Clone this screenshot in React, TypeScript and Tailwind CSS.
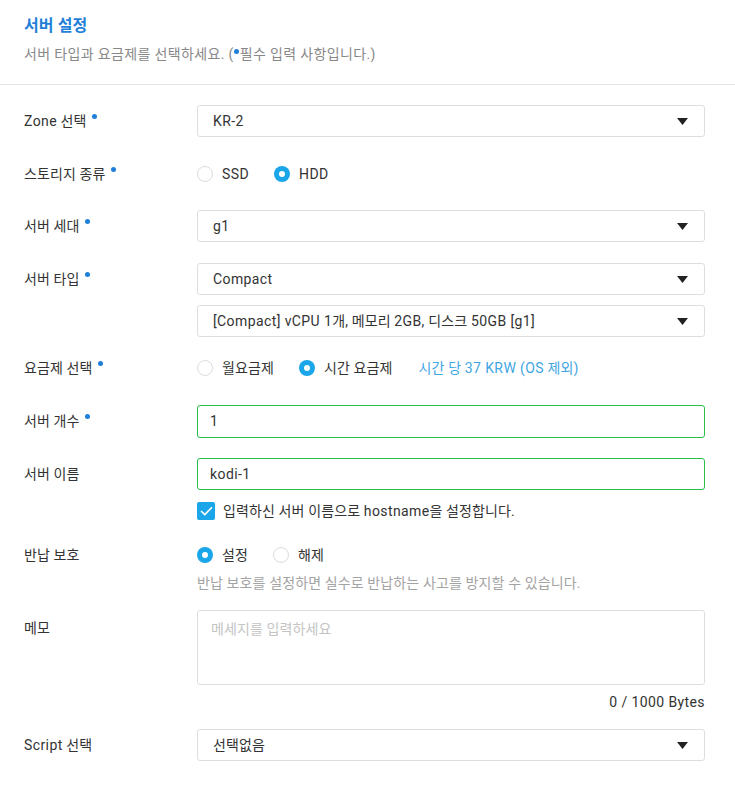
import React from 'react';

const FONT = { fontFamily: 'Roboto, "Noto Sans CJK KR", sans-serif' };

// Latin text in the reference renders slightly wider than Roboto here
function L({ children }: { children: React.ReactNode }) {
  return <span className="tracking-[0.4px]">{children}</span>;
}

function Dot() {
  return <span className="ml-[5px] mb-[10px] inline-block h-[5px] w-[5px] rounded-full bg-[#1f7fd9]" />;
}

function Label({ children, required }: { children: React.ReactNode; required?: boolean }) {
  return (
    <div className="flex w-[173px] shrink-0 items-center text-[14px] text-[#333]">
      <span>{children}</span>
      {required && <Dot />}
    </div>
  );
}

function Select({ children }: { children: React.ReactNode }) {
  return (
    <div className="flex h-[32px] flex-1 items-center justify-between rounded-[3px] border border-[#dedede] bg-white pl-[15px] pr-[16px] text-[14px] text-[#333]">
      <span>{children}</span>
      <svg width="11" height="7" viewBox="0 0 11 7">
        <path d="M0 0H11L5.5 7Z" fill="#222" />
      </svg>
    </div>
  );
}

function Radio({ checked, children }: { checked?: boolean; children: React.ReactNode }) {
  return (
    <div className="flex items-center gap-[9px] text-[14px] text-[#333]">
      {checked ? (
        <span className="flex h-[16px] w-[16px] items-center justify-center rounded-full bg-[#1aa6e8]">
          <span className="h-[6px] w-[6px] rounded-full bg-white" />
        </span>
      ) : (
        <span className="h-[16px] w-[16px] rounded-full border border-[#dcdcdc] bg-white" />
      )}
      <span>{children}</span>
    </div>
  );
}

function Row({ children, className = '' }: { children: React.ReactNode; className?: string }) {
  return <div className={`flex items-center ${className}`}>{children}</div>;
}

export default function App() {
  return (
    <div className="min-h-screen w-[735px] bg-white tracking-[0.12px]" style={FONT}>
      {/* Header */}
      <div className="border-b border-[#e3e3e3] px-[24px] pt-[16px] pb-[20px]">
        <h1 className="text-[16px] font-bold leading-[20px] text-[#1f7fd9]">서버 설정</h1>
        <p className="mt-[8px] flex items-center text-[14px] leading-[20px] tracking-[0.35px] text-[#888]">
          서버 타입과 요금제를 선택하세요. (
          <span className="mb-[5px] mr-[1px] inline-block h-[5px] w-[5px] rounded-full bg-[#1f7fd9]" />
          필수 입력 사항입니다.)
        </p>
      </div>

      {/* Form */}
      <div className="px-[24px] pt-[20px] pr-[30px]">
        <Row className="h-[32px]">
          <Label required>
            <L>Zone</L> 선택
          </Label>
          <Select>
            <L>KR-2</L>
          </Select>
        </Row>

        <Row className="mt-[21px] h-[32px]">
          <Label required>스토리지 종류</Label>
          <div className="flex items-center gap-[25px]">
            <Radio>
              <L>SSD</L>
            </Radio>
            <Radio checked>
              <L>HDD</L>
            </Radio>
          </div>
        </Row>

        <Row className="mt-[20px] h-[32px]">
          <Label required>서버 세대</Label>
          <Select>
            <L>g1</L>
          </Select>
        </Row>

        <Row className="mt-[21px] h-[32px]">
          <Label required>서버 타입</Label>
          <Select>
            <L>Compact</L>
          </Select>
        </Row>
        <Row className="mt-[10px] h-[32px]">
          <div className="w-[173px] shrink-0" />
          <Select>
            <L>[Compact] vCPU 1</L>개, 메모리 <L>2GB,</L> 디스크 <L>50GB [g1]</L>
          </Select>
        </Row>

        <Row className="mt-[15px] h-[32px]">
          <Label required>요금제 선택</Label>
          <div className="flex items-center gap-[25px]">
            <Radio>월요금제</Radio>
            <Radio checked>시간 요금제</Radio>
            <span className="ml-[1px] text-[14px] text-[#3fa6e3]">
              시간 당 <L>37 KRW (OS</L> 제외)
            </span>
          </div>
        </Row>

        <Row className="mt-[21px] h-[33px]">
          <Label required>서버 개수</Label>
          <div className="flex h-[33px] flex-1 items-center rounded-[3px] border border-[#27c04a] pl-[12px] text-[14px] text-[#333]">
            <L>1</L>
          </div>
        </Row>

        <Row className="mt-[20px] h-[32px]">
          <Label>서버 이름</Label>
          <div className="flex h-[32px] flex-1 items-center rounded-[3px] border border-[#27c04a] pl-[12px] text-[14px] text-[#333]">
            <L>kodi-1</L>
          </div>
        </Row>

        <Row className="mt-[10px] h-[22px]">
          <div className="w-[173px] shrink-0" />
          <div className="flex items-center gap-[8px] text-[14px] text-[#333]">
            <span className="flex h-[18px] w-[18px] items-center justify-center rounded-[2px] bg-[#1aa6e8]">
              <svg width="13" height="10" viewBox="0 0 13 10">
                <path d="M1 5L4.8 8.6L12 1.2" fill="none" stroke="white" strokeWidth="1.6" />
              </svg>
            </span>
            <span>
              입력하신 서버 이름으로 <L>hostname</L>을 설정합니다.
            </span>
          </div>
        </Row>

        <Row className="mt-[17px] h-[32px]">
          <Label>반납 보호</Label>
          <div className="flex items-center gap-[25px]">
            <Radio checked>설정</Radio>
            <Radio>해제</Radio>
          </div>
        </Row>
        <Row className="mt-[2px]">
          <div className="w-[173px] shrink-0" />
          <p className="text-[14px] leading-[20px] text-[#a3a3a3]">
            반납 보호를 설정하면 실수로 반납하는 사고를 방지할 수 있습니다.
          </p>
        </Row>

        <div className="mt-[17px] flex">
          <div className="w-[173px] shrink-0 pt-[8px] text-[14px] text-[#333]">메모</div>
          <div className="flex-1">
            <div className="h-[75px] rounded-[3px] border border-[#dedede] px-[13px] pt-[8px] text-[14px] text-[#c4c4c4]">
              메세지를 입력하세요
            </div>
            <div className="mt-[7px] text-right text-[14px] leading-[20px] text-[#333]">
              <L>0 / 1000 Bytes</L>
            </div>
          </div>
        </div>

        <Row className="mt-[17px] h-[32px]">
          <Label>
            <L>Script</L> 선택
          </Label>
          <Select>선택없음</Select>
        </Row>
      </div>
    </div>
  );
}
